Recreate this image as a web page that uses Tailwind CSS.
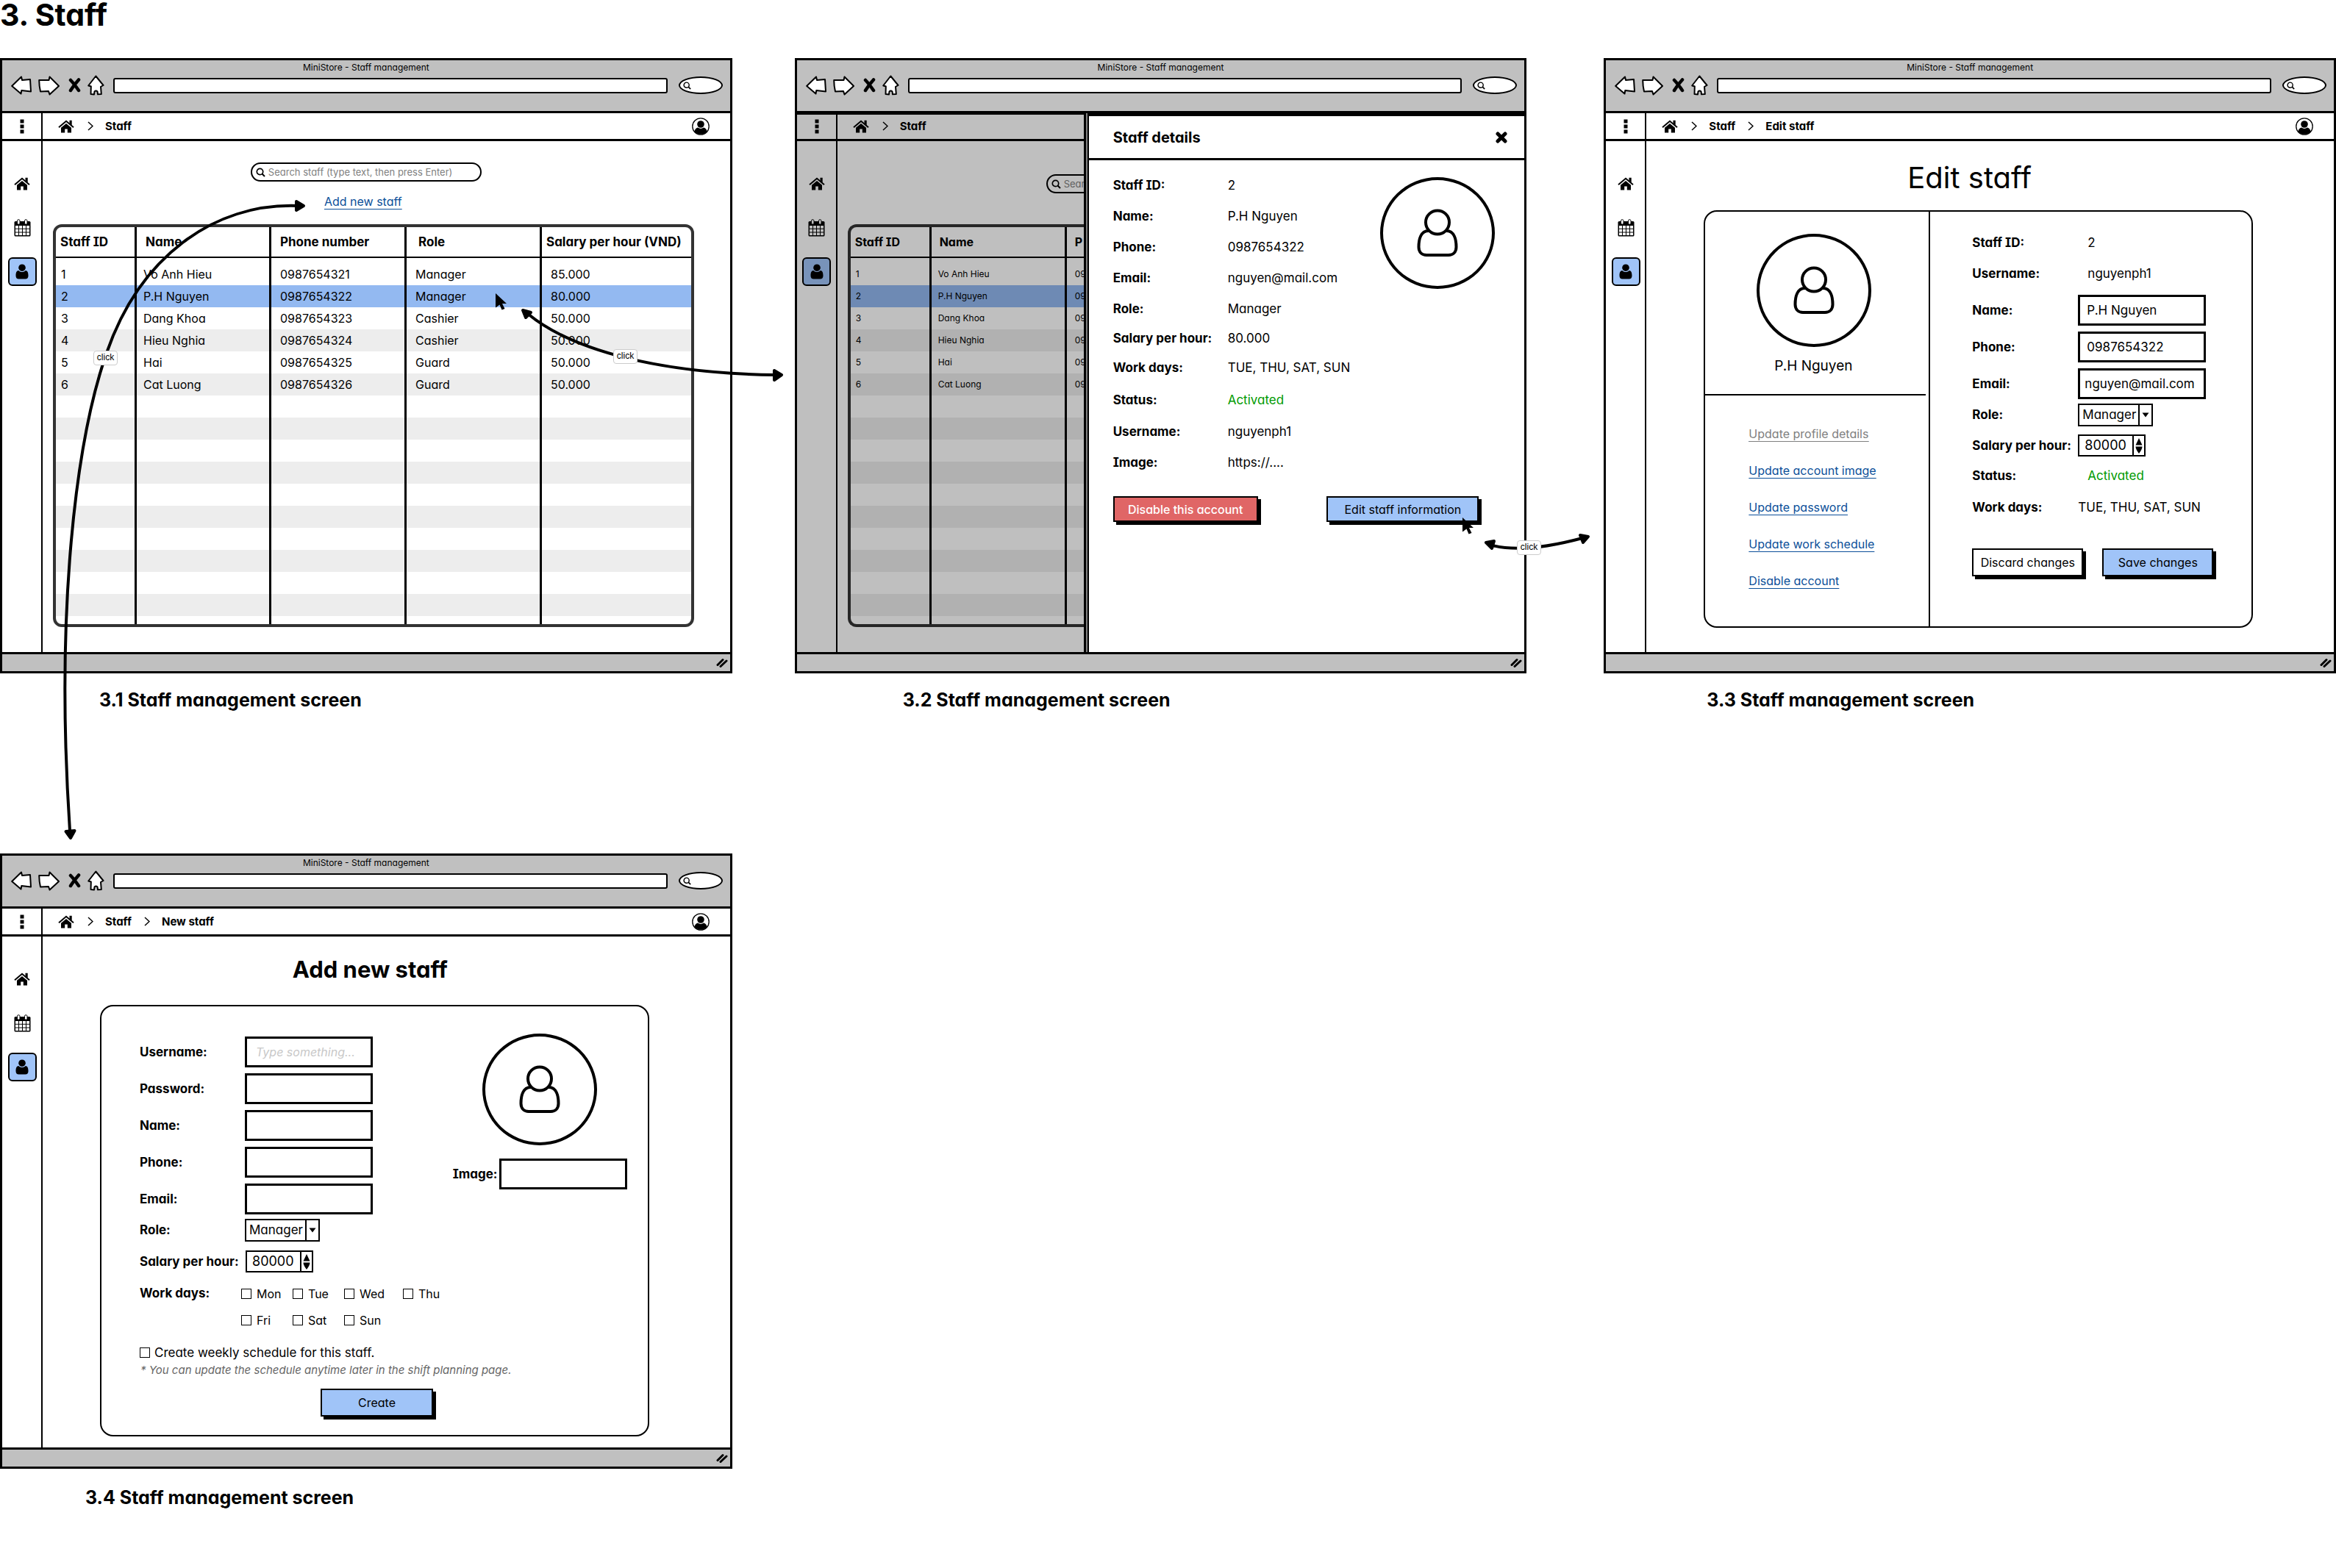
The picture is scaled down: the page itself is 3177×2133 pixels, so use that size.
<!DOCTYPE html>
<html lang="en">
<head>
<meta charset="utf-8">
<title>MiniStore - Staff wireframes</title>
<script src="https://cdn.jsdelivr.net/npm/@tailwindcss/browser@4"></script>
</head>
<body class="relative bg-white text-black [font-family:Inter,sans-serif] [font-feature-settings:'cv11','cv08'] overflow-x-hidden">

<!-- Shared icons -->
<svg class="hidden">
  <symbol id="back" viewBox="0 0 28 27"><path d="M1.2 14 14 1.5 15 6 26 5 27 21.500 14.300 20 13.500 24.500Z" fill="#fff" stroke="#000" stroke-width="2" stroke-linejoin="round"/></symbol>
  <symbol id="forward" viewBox="0 0 29 27"><path d="M1.200 6 14.500 6 15.500 1.500 28 14 15.500 25.500 14 21 3 21.500Q1.200 14 1.200 6Z" fill="#fff" stroke="#000" stroke-width="2" stroke-linejoin="round"/></symbol>
  <symbol id="stop" viewBox="0 0 17 20"><path d="M3 3Q7 7 14 17M14 2.500Q8 9 3 17" fill="none" stroke="#000" stroke-width="4.500" stroke-linecap="round"/></symbol>
  <symbol id="up" viewBox="0 0 23 28"><path d="M11.300 1.500 21.500 14 18 16 18.800 26 14 26.300 13.500 22.500Q11.500 20.500 9.500 22.500L9 26.500 4.500 26 4.800 15.500 1.200 14.500Z" fill="#fff" stroke="#000" stroke-width="2" stroke-linejoin="round"/></symbol>
  <symbol id="house" viewBox="0 0 22 18"><path d="M1 10.200 11 1.800 21 10.200" fill="none" stroke="#000" stroke-width="2"/><path d="M15.500 .8h3.200v6.500l-3.200-2.600ZM4 10.800 11 5l7 5.800V17.500H12.800V12.500H9.200V17.500H4Z"/></symbol>
  <symbol id="calendar" viewBox="0 0 23 24"><path d="M2 3H21Q22.500 3 22.500 4.500V22Q22.500 23.500 21 23.500H2Q.5 23.500 .5 22V4.500Q.5 3 2 3Z"/><path d="M2 9h4v3.700H2zM7 9h4v3.700H7zM12 9h4v3.700h-4zM17 9h4v3.700h-4zM2 13.700h4v3.700H2zM7 13.700h4v3.700H7zM12 13.700h4v3.700h-4zM17 13.700h4v3.700h-4zM2 18.400h4v3.700H2zM7 18.400h4v3.700H7zM12 18.400h4v3.700h-4zM17 18.400h4v3.700h-4z" fill="#fff"/><rect x="4.500" y=".7" width="3.500" height="6.500" rx="1.700" fill="#fff" stroke="#000"/><rect x="14.500" y=".7" width="3.500" height="6.500" rx="1.700" fill="#fff" stroke="#000"/></symbol>
  <symbol id="user" viewBox="0 0 18 21"><circle cx="9" cy="5.200" r="4.800"/><path d="M4.300 9C1.500 9 .5 12 .5 16 .5 19 2 20.500 4.500 20.500h9C16 20.500 17.500 19 17.500 16 17.500 12 16.500 9 13.700 9 11 11.800 7 11.800 4.300 9Z"/></symbol>
  <symbol id="account" viewBox="0 0 24 24"><circle cx="12" cy="12" r="11.200" fill="none" stroke="#000" stroke-width="1.300"/><circle cx="12" cy="9" r="4.800"/><path d="M3.500 19Q4 14.500 8 13.500 12 16.300 16 13.500 20 14.500 20.500 19A11.500 11.500 0 0 1 3.500 19Z"/></symbol>
  <symbol id="person" viewBox="0 0 56 66"><circle cx="28" cy="18.500" r="16" fill="none" stroke="#000" stroke-width="4"/><path d="M16 30C5 30 2.500 42 2.500 52 2.500 59 7 63 13 63H43C49 63 53.500 59 53.500 52 53.500 42 51 30 40 30" fill="none" stroke="#000" stroke-width="4"/></symbol>
  <symbol id="chevron" viewBox="0 0 8 13"><path d="M1 1 7 6.500 1 12" fill="none" stroke="#000" stroke-width="1.500"/></symbol>
  <symbol id="lens" viewBox="0 0 13 13"><circle cx="5.500" cy="5.500" r="4.200" fill="none" stroke="#000" stroke-width="1.700"/><path d="M8.500 8.500 12 12" stroke="#000" stroke-width="2"/></symbol>
  <symbol id="kebab" viewBox="0 0 6 20"><path d="M.5 .5h5v5h-5zM.5 7.500h5v5h-5zM.5 14.500h5v5h-5z"/></symbol>
  <symbol id="grip" viewBox="0 0 16 13"><path d="M2 9.500 9 2.500M6 11.500 14 4" stroke="#000" stroke-width="3" stroke-linecap="round"/></symbol>
  <symbol id="pointer" viewBox="0 0 17 25"><path d="M1 1 16 15H10L13.500 22 9.500 23.500 6.500 16.500 1 20.500Z"/></symbol>
  <symbol id="cross" viewBox="0 0 16 16"><path d="M3 3 13 13M13 3 3 13" stroke="#000" stroke-width="5" stroke-linecap="round"/></symbol>
  <symbol id="caret" viewBox="0 0 10 7"><path d="M.5 .5h9L5 6.500Z"/></symbol>
  <symbol id="steps" viewBox="0 0 10 21"><path d="M5 0 9.500 9.500H.5ZM.5 11.500h9Q9.500 15 5 21 .5 15 .5 11.500Z"/></symbol>
</svg>

<h1 class="text-[41px] leading-10 font-bold">3. Staff</h1>

<main class="mt-[39px] flex items-start">

  <!-- Column 1 -->
  <div class="flex-1 min-w-0">

    <!-- 3.1 Staff list -->
    <section class="border-3 border-black bg-white">
      <header class="h-[72px] bg-[#c0c0c0] border-b-3 border-black">
        <p class="pt-[2px] text-center text-[12px] leading-4">MiniStore - Staff management</p>
        <div class="flex items-center pl-3 pr-[10px] h-8">
          <svg class="w-7 h-[27px]"><use href="#back"/></svg>
          <svg class="ml-[9px] w-[29px] h-[27px]"><use href="#forward"/></svg>
          <svg class="ml-3 w-[17px] h-5"><use href="#stop"/></svg>
          <svg class="ml-[9px] w-[23px] h-7"><use href="#up"/></svg>
          <input aria-label="Address" class="ml-3 flex-1 min-w-0 h-[21px] bg-white border-2 border-black rounded-[3px]">
          <div class="ml-[15px] w-[60px] h-6 flex items-center pl-1 bg-white border-2 border-black rounded-[50%/50%]"><svg class="size-[11px]"><use href="#lens"/></svg></div>
        </div>
      </header>
      <nav class="h-[38px] flex items-center border-b-3 border-black text-[15px] leading-5 font-bold">
        <div class="w-[55px] h-full shrink-0 pl-px border-r-2 border-black grid place-items-center"><svg class="w-[6px] h-5"><use href="#kebab"/></svg></div>
        <a href="#" aria-label="Home" class="ml-[21px]"><svg class="w-[22px] h-[18px]"><use href="#house"/></svg></a>
        <svg class="ml-[18px] w-2 h-[13px]"><use href="#chevron"/></svg>
        <a href="#" class="ml-4">Staff</a>
        <a href="#" aria-label="Account" class="ml-auto mr-[28px]"><svg class="size-6"><use href="#account"/></svg></a>
      </nav>
      <div class="flex min-h-[695px]">
        <aside class="w-[55px] shrink-0 pl-px border-r-2 border-black flex flex-col items-center pt-[49px]">
          <a href="#" aria-label="Home"><svg class="w-[22px] h-[18px]"><use href="#house"/></svg></a>
          <a href="#" aria-label="Calendar" class="mt-[39px]"><svg class="w-[23px] h-6"><use href="#calendar"/></svg></a>
          <a href="#" aria-label="Staff" class="mt-[28px] size-[39px] grid place-items-center bg-[#a0c4f8] border-2 border-black rounded-md"><svg class="w-[18px] h-[21px]"><use href="#user"/></svg></a>
        </aside>
        <div class="flex-1 min-w-0 pl-[14px] pr-[49px] pt-[29px]">
          <div class="flex flex-col items-center pr-5">
            <label class="w-[314px] h-[26px] flex items-center pl-[5px] border-2 border-black rounded-full">
              <svg class="size-[13px]"><use href="#lens"/></svg>
              <input type="search" aria-label="Search staff" placeholder="Search staff (type text, then press Enter)" class="ml-1 flex-1 min-w-0 text-[13px] leading-5 outline-none placeholder:text-[#808080]">
            </label>
            <a href="#" class="mt-[15px] mr-2 text-[16px] leading-6 text-[#0b4f99] underline underline-offset-4">Add new staff</a>
          </div>
          <div class="mt-[19px] border-4 border-[#333] rounded-[12px] overflow-hidden">
            <table class="w-full table-fixed border-separate border-spacing-0 text-left text-[16px] leading-5 [&_td]:h-[30px] [&_td]:p-0 [&_td]:pl-3 [&_td:first-child]:pl-[7px] [&_td:nth-child(2)]:pl-[9px] [&_td]:border-r-3 [&_td:last-child]:border-r-0 [&_th]:border-r-3 [&_th:last-child]:border-r-0 [&_td]:border-black [&_th]:border-black">
              <colgroup><col class="w-[110px]"><col class="w-[183px]"><col class="w-[184px]"><col class="w-[184px]"><col></colgroup>
              <thead class="text-[17px]"><tr class="h-[42px] [&>th]:border-b-2 [&>th]:p-0 [&>th]:font-bold"><th class="pl-[6px]!">Staff ID</th><th class="pl-3!">Name</th><th class="pl-3!">Phone number</th><th class="pl-4!">Role</th><th class="pl-[6px]!">Salary per hour (VND)</th></tr></thead>
              <tbody>
                <tr class="[&>td]:h-[37px]! [&>td]:pt-[7px]!"><td>1</td><td>Vo Anh Hieu</td><td>0987654321</td><td>Manager</td><td>85.000</td></tr>
                <tr class="bg-[#93b9f1]"><td>2</td><td>P.H Nguyen</td><td>0987654322</td><td>Manager</td><td>80.000</td></tr>
                <tr><td>3</td><td>Dang Khoa</td><td>0987654323</td><td>Cashier</td><td>50.000</td></tr>
                <tr class="bg-[#ededed]"><td>4</td><td>Hieu Nghia</td><td>0987654324</td><td>Cashier</td><td>50.000</td></tr>
                <tr><td>5</td><td>Hai</td><td>0987654325</td><td>Guard</td><td>50.000</td></tr>
                <tr class="bg-[#ededed]"><td>6</td><td>Cat Luong</td><td>0987654326</td><td>Guard</td><td>50.000</td></tr>
                <tr><td></td><td></td><td></td><td></td><td></td></tr>
                <tr class="bg-[#ededed]"><td></td><td></td><td></td><td></td><td></td></tr>
                <tr><td></td><td></td><td></td><td></td><td></td></tr>
                <tr class="bg-[#ededed]"><td></td><td></td><td></td><td></td><td></td></tr>
                <tr><td></td><td></td><td></td><td></td><td></td></tr>
                <tr class="bg-[#ededed]"><td></td><td></td><td></td><td></td><td></td></tr>
                <tr><td></td><td></td><td></td><td></td><td></td></tr>
                <tr class="bg-[#ededed]"><td></td><td></td><td></td><td></td><td></td></tr>
                <tr><td></td><td></td><td></td><td></td><td></td></tr>
                <tr class="bg-[#ededed]"><td></td><td></td><td></td><td></td><td></td></tr>
                <tr class="[&>td]:h-[11px]!"><td></td><td></td><td></td><td></td><td></td></tr>
              </tbody>
            </table>
          </div>
        </div>
      </div>
      <footer class="h-[26px] bg-[#c0c0c0] border-t-3 border-black flex items-center justify-end pr-[3px]"><svg class="w-4 h-[13px]"><use href="#grip"/></svg></footer>
    </section>
    <h2 class="mt-5 pl-[135px] text-[25px] leading-8 font-bold">3.1 Staff management screen</h2>

    <!-- 3.4 Add new staff -->
    <section class="mt-[193px] border-3 border-black bg-white">
      <header class="h-[72px] bg-[#c0c0c0] border-b-3 border-black">
        <p class="pt-[2px] text-center text-[12px] leading-4">MiniStore - Staff management</p>
        <div class="flex items-center pl-3 pr-[10px] h-8">
          <svg class="w-7 h-[27px]"><use href="#back"/></svg>
          <svg class="ml-[9px] w-[29px] h-[27px]"><use href="#forward"/></svg>
          <svg class="ml-3 w-[17px] h-5"><use href="#stop"/></svg>
          <svg class="ml-[9px] w-[23px] h-7"><use href="#up"/></svg>
          <input aria-label="Address" class="ml-3 flex-1 min-w-0 h-[21px] bg-white border-2 border-black rounded-[3px]">
          <div class="ml-[15px] w-[60px] h-6 flex items-center pl-1 bg-white border-2 border-black rounded-[50%/50%]"><svg class="size-[11px]"><use href="#lens"/></svg></div>
        </div>
      </header>
      <nav class="h-[38px] flex items-center border-b-3 border-black text-[15px] leading-5 font-bold">
        <div class="w-[55px] h-full shrink-0 pl-px border-r-2 border-black grid place-items-center"><svg class="w-[6px] h-5"><use href="#kebab"/></svg></div>
        <a href="#" aria-label="Home" class="ml-[21px]"><svg class="w-[22px] h-[18px]"><use href="#house"/></svg></a>
        <svg class="ml-[18px] w-2 h-[13px]"><use href="#chevron"/></svg>
        <a href="#" class="ml-4">Staff</a>
        <svg class="ml-[17px] w-2 h-[13px]"><use href="#chevron"/></svg>
        <a href="#" class="ml-4">New staff</a>
        <a href="#" aria-label="Account" class="ml-auto mr-[28px]"><svg class="size-6"><use href="#account"/></svg></a>
      </nav>
      <div class="flex min-h-[695px]">
        <aside class="w-[55px] shrink-0 pl-px border-r-2 border-black flex flex-col items-center pt-[49px]">
          <a href="#" aria-label="Home"><svg class="w-[22px] h-[18px]"><use href="#house"/></svg></a>
          <a href="#" aria-label="Calendar" class="mt-[39px]"><svg class="w-[23px] h-6"><use href="#calendar"/></svg></a>
          <a href="#" aria-label="Staff" class="mt-[28px] size-[39px] grid place-items-center bg-[#a0c4f8] border-2 border-black rounded-md"><svg class="w-[18px] h-[21px]"><use href="#user"/></svg></a>
        </aside>
        <div class="flex-1 min-w-0 pt-[21px]">
          <h3 class="pr-11 text-center text-[31px] leading-[48px] font-bold">Add new staff</h3>
          <form class="mt-6 ml-[78px] mr-[110px] pt-[37px] pb-[25px] border-2 border-black rounded-[18px]">
            <div class="flex pl-[52px] pr-[28px]">
              <div class="flex-1 min-w-0 text-[17px] leading-5">
                <div class="h-[50px] flex items-center"><label for="n-user" class="w-[143px] font-bold">Username:</label><input id="n-user" placeholder="Type something..." class="w-[174px] h-[42px] px-3 border-3 border-black outline-none placeholder:italic placeholder:text-[16px] placeholder:text-[#c8c8c8]"></div>
                <div class="h-[50px] flex items-center"><label for="n-pass" class="w-[143px] font-bold">Password:</label><input id="n-pass" type="password" class="w-[174px] h-[42px] px-3 border-3 border-black"></div>
                <div class="h-[50px] flex items-center"><label for="n-name" class="w-[143px] font-bold">Name:</label><input id="n-name" class="w-[174px] h-[42px] px-3 border-3 border-black"></div>
                <div class="h-[50px] flex items-center"><label for="n-phone" class="w-[143px] font-bold">Phone:</label><input id="n-phone" type="tel" class="w-[174px] h-[42px] px-3 border-3 border-black"></div>
                <div class="h-[50px] flex items-center"><label for="n-email" class="w-[143px] font-bold">Email:</label><input id="n-email" type="email" class="w-[174px] h-[42px] px-3 border-3 border-black"></div>
                <div class="h-[34px] flex items-center"><label for="n-role" class="w-[143px] font-bold">Role:</label>
                  <div class="w-[102px] h-[31px] flex border-2 border-black"><select id="n-role" class="appearance-none flex-1 min-w-0 pl-1 outline-none"><option>Manager</option><option>Cashier</option><option>Guard</option></select><span class="w-[18px] border-l-2 border-black grid place-items-center"><svg class="w-[10px] h-[7px]"><use href="#caret"/></svg></span></div>
                </div>
                <div class="h-[52px] flex items-center"><label for="n-salary" class="w-36 font-bold">Salary per hour:</label>
                  <div class="w-[92px] h-[30px] flex border-2 border-black"><input id="n-salary" type="number" value="80000" class="appearance-none [appearance:textfield] [&::-webkit-inner-spin-button]:appearance-none flex-1 min-w-0 pl-[7px] text-[18px] outline-none"><span class="w-4 border-l-2 border-black grid place-items-center"><svg class="w-[10px] h-[21px]"><use href="#steps"/></svg></span></div>
                </div>
                <fieldset class="flex text-[16px]">
                  <legend class="float-left w-[138px] shrink-0 text-[17px] leading-[35px] font-bold">Work days:</legend>
                  <div class="grid grid-cols-[70px_70px_80px_70px] auto-rows-[36px] items-center">
                    <label class="flex items-center gap-[7px]"><input type="checkbox" class="appearance-none size-[14px] border border-black">Mon</label>
                    <label class="flex items-center gap-[7px]"><input type="checkbox" class="appearance-none size-[14px] border border-black">Tue</label>
                    <label class="flex items-center gap-[7px]"><input type="checkbox" class="appearance-none size-[14px] border border-black">Wed</label>
                    <label class="flex items-center gap-[7px]"><input type="checkbox" class="appearance-none size-[14px] border border-black">Thu</label>
                    <label class="flex items-center gap-[7px]"><input type="checkbox" class="appearance-none size-[14px] border border-black">Fri</label>
                    <label class="flex items-center gap-[7px]"><input type="checkbox" class="appearance-none size-[14px] border border-black">Sat</label>
                    <label class="flex items-center gap-[7px]"><input type="checkbox" class="appearance-none size-[14px] border border-black">Sun</label>
                  </div>
                </fieldset>
              </div>
              <div class="w-[237px] shrink-0 flex flex-col items-center">
                <div class="w-[156px] h-[152px] grid place-items-center border-4 border-black rounded-[50%]"><svg class="w-[56px] h-[66px]"><use href="#person"/></svg></div>
                <div class="mt-[18px] w-full flex items-center justify-between"><label for="n-image" class="text-[17px] leading-5 font-bold">Image:</label><input id="n-image" class="w-[174px] h-[42px] px-3 border-3 border-black"></div>
              </div>
            </div>
            <label class="mt-[14px] ml-[52px] flex items-center gap-[6px] text-[17px] leading-6"><input type="checkbox" class="appearance-none size-[14px] border border-black">Create weekly schedule for this staff.</label>
            <p class="ml-[53px] text-[15px] leading-6 italic text-[#666]">* You can update the schedule anytime later in the shift planning page.</p>
            <button type="button" class="mt-[13px] ml-[298px] block w-[153px] h-[38px] text-[16px] leading-5 bg-[#a0c4f8] border-2 border-black shadow-[4px_4px_0_#000]">Create</button>
          </form>
        </div>
      </div>
      <footer class="h-[26px] bg-[#c0c0c0] border-t-3 border-black flex items-center justify-end pr-[3px]"><svg class="w-4 h-[13px]"><use href="#grip"/></svg></footer>
    </section>
    <h2 class="mt-[23px] pl-[116px] text-[25px] leading-8 font-bold">3.4 Staff management screen</h2>
  </div>

  <!-- Column 2: 3.2 Staff details -->
  <div class="flex-1 min-w-0 ml-[85px]">
    <section class="border-3 border-black bg-white">
      <header class="h-[72px] bg-[#c0c0c0] border-b-3 border-black">
        <p class="pt-[2px] text-center text-[12px] leading-4">MiniStore - Staff management</p>
        <div class="flex items-center pl-3 pr-[10px] h-8">
          <svg class="w-7 h-[27px]"><use href="#back"/></svg>
          <svg class="ml-[9px] w-[29px] h-[27px]"><use href="#forward"/></svg>
          <svg class="ml-3 w-[17px] h-5"><use href="#stop"/></svg>
          <svg class="ml-[9px] w-[23px] h-7"><use href="#up"/></svg>
          <input aria-label="Address" class="ml-3 flex-1 min-w-0 h-[21px] bg-white border-2 border-black rounded-[3px]">
          <div class="ml-[15px] w-[60px] h-6 flex items-center pl-1 bg-white border-2 border-black rounded-[50%/50%]"><svg class="size-[11px]"><use href="#lens"/></svg></div>
        </div>
      </header>
      <div class="relative">
        <nav class="h-[38px] flex items-center border-b-3 border-black text-[15px] leading-5 font-bold">
          <div class="w-[55px] h-full shrink-0 pl-px border-r-2 border-black grid place-items-center"><svg class="w-[6px] h-5"><use href="#kebab"/></svg></div>
          <a href="#" aria-label="Home" class="ml-[21px]"><svg class="w-[22px] h-[18px]"><use href="#house"/></svg></a>
          <svg class="ml-[18px] w-2 h-[13px]"><use href="#chevron"/></svg>
          <a href="#" class="ml-4">Staff</a>
        </nav>
        <div class="flex min-h-[695px]">
          <aside class="w-[55px] shrink-0 pl-px border-r-2 border-black flex flex-col items-center pt-[49px]">
            <a href="#" aria-label="Home"><svg class="w-[22px] h-[18px]"><use href="#house"/></svg></a>
            <a href="#" aria-label="Calendar" class="mt-[39px]"><svg class="w-[23px] h-6"><use href="#calendar"/></svg></a>
            <a href="#" aria-label="Staff" class="mt-[28px] size-[39px] grid place-items-center bg-[#a0c4f8] border-2 border-black rounded-md"><svg class="w-[18px] h-[21px]"><use href="#user"/></svg></a>
          </aside>
          <div class="flex-1 min-w-0 pl-[14px] pt-[45px]">
            <div class="pl-[270px]">
              <label class="w-[314px] h-[26px] flex items-center pl-[5px] border-2 border-black rounded-full">
                <svg class="size-[13px]"><use href="#lens"/></svg>
                <input type="search" aria-label="Search staff" placeholder="Search" class="ml-1 w-16 text-[13px] leading-5 outline-none placeholder:text-[#808080]">
              </label>
            </div>
            <div class="mt-[42px] w-[330px] h-[548px] border-4 border-r-0 border-[#333] rounded-l-[12px] overflow-hidden">
              <table class="w-full table-fixed border-separate border-spacing-0 text-left text-[12px] leading-5 [&_td]:h-[30px] [&_td]:p-0 [&_td]:pl-[11px] [&_td:first-child]:pl-[7px] [&_td:nth-child(2)]:pl-[9px] [&_td]:border-r-3 [&_td:last-child]:border-r-0 [&_th]:border-r-3 [&_th:last-child]:border-r-0 [&_td]:border-black [&_th]:border-black [&_td]:overflow-hidden">
                <colgroup><col class="w-[110px]"><col class="w-[184px]"><col></colgroup>
                <thead class="text-[16px]"><tr class="h-[42px] [&>th]:border-b-2 [&>th]:p-0 [&>th]:font-bold"><th class="pl-[6px]!">Staff ID</th><th class="pl-[11px]!">Name</th><th class="pl-[11px]!">P</th></tr></thead>
                <tbody>
                  <tr class="[&>td]:h-[37px]! [&>td]:pt-[7px]!"><td>1</td><td>Vo Anh Hieu</td><td>09</td></tr>
                  <tr class="bg-[#93b9f1]"><td>2</td><td>P.H Nguyen</td><td>09</td></tr>
                  <tr><td>3</td><td>Dang Khoa</td><td>09</td></tr>
                  <tr class="bg-[#ededed]"><td>4</td><td>Hieu Nghia</td><td>09</td></tr>
                  <tr><td>5</td><td>Hai</td><td>09</td></tr>
                  <tr class="bg-[#ededed]"><td>6</td><td>Cat Luong</td><td>09</td></tr>
                  <tr><td></td><td></td><td></td></tr>
                  <tr class="bg-[#ededed]"><td></td><td></td><td></td></tr>
                  <tr><td></td><td></td><td></td></tr>
                  <tr class="bg-[#ededed]"><td></td><td></td><td></td></tr>
                  <tr><td></td><td></td><td></td></tr>
                  <tr class="bg-[#ededed]"><td></td><td></td><td></td></tr>
                  <tr><td></td><td></td><td></td></tr>
                  <tr class="bg-[#ededed]"><td></td><td></td><td></td></tr>
                  <tr><td></td><td></td><td></td></tr>
                  <tr class="bg-[#ededed]"><td></td><td></td><td></td></tr>
                  <tr class="[&>td]:h-[11px]!"><td></td><td></td><td></td></tr>
                </tbody>
              </table>
            </div>
          </div>
        </div>

        <!-- Backdrop and drawer -->
        <div class="absolute inset-0 flex">
          <div class="w-[393px] shrink-0 bg-black/25 border-r-3 border-t-2 border-black"></div>
          <div class="w-[2px] shrink-0 bg-[#808080]"></div>
          <div class="flex-1 min-w-0 bg-white border-l-2 border-t-4 border-black">
            <div class="h-[60px] flex items-center justify-between pl-[33px] pr-[23px] border-b-3 border-black">
              <h3 class="text-[20px] leading-6 font-bold">Staff details</h3>
              <button type="button" aria-label="Close" class="size-4"><svg class="size-4"><use href="#cross"/></svg></button>
            </div>
            <div class="flex justify-between pl-[33px] pr-10 pt-[13px]">
              <dl class="grid grid-cols-[156px_auto] auto-rows-[42px] grid-rows-[42px_42px_42px_42px_42px_38px_42px_45px] items-center text-[17px] leading-5 [&_dt]:font-bold">
                <dt>Staff ID:</dt><dd>2</dd>
                <dt>Name:</dt><dd>P.H Nguyen</dd>
                <dt>Phone:</dt><dd>0987654322</dd>
                <dt>Email:</dt><dd>nguyen@mail.com</dd>
                <dt>Role:</dt><dd>Manager</dd>
                <dt>Salary per hour:</dt><dd>80.000</dd>
                <dt>Work days:</dt><dd>TUE, THU, SAT, SUN</dd>
                <dt>Status:</dt><dd class="text-[#009a00]">Activated</dd>
                <dt>Username:</dt><dd>nguyenph1</dd>
                <dt>Image:</dt><dd>https://....</dd>
              </dl>
              <div class="mt-[10px] w-[156px] h-[152px] shrink-0 grid place-items-center border-4 border-black rounded-[50%]"><svg class="w-[56px] h-[66px]"><use href="#person"/></svg></div>
            </div>
            <div class="mt-[25px] pl-[33px] pr-[62px] flex justify-between text-[16px] leading-5">
              <button type="button" class="w-[197px] h-[35px] text-white font-medium bg-[#e06666] border-2 border-black shadow-[4px_4px_0_#000]">Disable this account</button>
              <button type="button" class="w-[207px] h-[35px] bg-[#a0c4f8] border-2 border-black shadow-[4px_4px_0_#000]">Edit staff information</button>
            </div>
          </div>
        </div>
      </div>
      <footer class="h-[26px] bg-[#c0c0c0] border-t-3 border-black flex items-center justify-end pr-[3px]"><svg class="w-4 h-[13px]"><use href="#grip"/></svg></footer>
    </section>
    <h2 class="mt-5 pl-[147px] text-[25px] leading-8 font-bold">3.2 Staff management screen</h2>
  </div>

  <!-- Column 3: 3.3 Edit staff -->
  <div class="flex-1 min-w-0 ml-[105px]">
    <section class="border-3 border-black bg-white">
      <header class="h-[72px] bg-[#c0c0c0] border-b-3 border-black">
        <p class="pt-[2px] text-center text-[12px] leading-4">MiniStore - Staff management</p>
        <div class="flex items-center pl-3 pr-[10px] h-8">
          <svg class="w-7 h-[27px]"><use href="#back"/></svg>
          <svg class="ml-[9px] w-[29px] h-[27px]"><use href="#forward"/></svg>
          <svg class="ml-3 w-[17px] h-5"><use href="#stop"/></svg>
          <svg class="ml-[9px] w-[23px] h-7"><use href="#up"/></svg>
          <input aria-label="Address" class="ml-3 flex-1 min-w-0 h-[21px] bg-white border-2 border-black rounded-[3px]">
          <div class="ml-[15px] w-[60px] h-6 flex items-center pl-1 bg-white border-2 border-black rounded-[50%/50%]"><svg class="size-[11px]"><use href="#lens"/></svg></div>
        </div>
      </header>
      <nav class="h-[38px] flex items-center border-b-3 border-black text-[15px] leading-5 font-bold">
        <div class="w-[55px] h-full shrink-0 pl-px border-r-2 border-black grid place-items-center"><svg class="w-[6px] h-5"><use href="#kebab"/></svg></div>
        <a href="#" aria-label="Home" class="ml-[21px]"><svg class="w-[22px] h-[18px]"><use href="#house"/></svg></a>
        <svg class="ml-[18px] w-2 h-[13px]"><use href="#chevron"/></svg>
        <a href="#" class="ml-4">Staff</a>
        <svg class="ml-[17px] w-2 h-[13px]"><use href="#chevron"/></svg>
        <a href="#" class="ml-4">Edit staff</a>
        <a href="#" aria-label="Account" class="ml-auto mr-[28px]"><svg class="size-6"><use href="#account"/></svg></a>
      </nav>
      <div class="flex min-h-[695px]">
        <aside class="w-[55px] shrink-0 pl-px border-r-2 border-black flex flex-col items-center pt-[49px]">
          <a href="#" aria-label="Home"><svg class="w-[22px] h-[18px]"><use href="#house"/></svg></a>
          <a href="#" aria-label="Calendar" class="mt-[39px]"><svg class="w-[23px] h-6"><use href="#calendar"/></svg></a>
          <a href="#" aria-label="Staff" class="mt-[28px] size-[39px] grid place-items-center bg-[#a0c4f8] border-2 border-black rounded-md"><svg class="w-[18px] h-[21px]"><use href="#user"/></svg></a>
        </aside>
        <div class="flex-1 min-w-0 pt-[26px]">
          <h3 class="pr-14 text-center text-[40px] leading-[48px]">Edit staff</h3>
          <div class="mt-5 ml-[78px] mr-[110px] min-h-[568px] flex border-2 border-black rounded-[18px]">
            <div class="w-[306px] shrink-0 border-r-2 border-black">
              <div class="pt-[30px] pb-[22px] flex flex-col items-center mr-1 border-b-2 border-black">
                <div class="w-[156px] h-[154px] grid place-items-center border-4 border-black rounded-[50%] mr-1"><svg class="w-[56px] h-[66px]"><use href="#person"/></svg></div>
                <p class="mt-[10px] mr-[6px] text-[19px] leading-8">P.H Nguyen</p>
              </div>
              <ul class="pt-[27px] pl-[59px] text-[16px] leading-[50px] text-[#0b4f99] underline underline-offset-4">
                <li><a href="#" class="text-[#808080] underline underline-offset-4">Update profile details</a></li>
                <li><a href="#">Update account image</a></li>
                <li><a href="#">Update password</a></li>
                <li><a href="#">Update work schedule</a></li>
                <li><a href="#">Disable account</a></li>
              </ul>
            </div>
            <form class="flex-1 min-w-0 pl-[57px] pt-[21px] text-[17px] leading-5">
              <div class="h-[42px] flex items-center"><span class="w-[157px] font-bold">Staff ID:</span><span>2</span></div>
              <div class="h-[42px] flex items-center"><span class="w-[157px] font-bold">Username:</span><span>nguyenph1</span></div>
              <div class="mt-1 h-[50px] flex items-center"><label for="e-name" class="w-36 font-bold">Name:</label><input id="e-name" value="P.H Nguyen" class="w-[174px] h-[42px] pl-[9px] border-3 border-black"></div>
              <div class="h-[50px] flex items-center"><label for="e-phone" class="w-36 font-bold">Phone:</label><input id="e-phone" type="tel" value="0987654322" class="w-[174px] h-[42px] pl-[9px] border-3 border-black"></div>
              <div class="h-[50px] flex items-center"><label for="e-email" class="w-36 font-bold">Email:</label><input id="e-email" type="email" value="nguyen@mail.com" class="w-[174px] h-[42px] pl-[6px] border-3 border-black"></div>
              <div class="h-[34px] flex items-center"><label for="e-role" class="w-36 font-bold">Role:</label>
                <div class="w-[102px] h-[31px] flex border-2 border-black"><select id="e-role" class="appearance-none flex-1 min-w-0 pl-1 outline-none"><option>Manager</option><option>Cashier</option><option>Guard</option></select><span class="w-[18px] border-l-2 border-black grid place-items-center"><svg class="w-[10px] h-[7px]"><use href="#caret"/></svg></span></div>
              </div>
              <div class="h-[50px] flex items-center"><label for="e-salary" class="w-36 font-bold">Salary per hour:</label>
                <div class="w-[92px] h-[30px] flex border-2 border-black"><input id="e-salary" type="number" value="80000" class="appearance-none [appearance:textfield] [&::-webkit-inner-spin-button]:appearance-none flex-1 min-w-0 pl-[7px] text-[18px] outline-none"><span class="w-4 border-l-2 border-black grid place-items-center"><svg class="w-[10px] h-[21px]"><use href="#steps"/></svg></span></div>
              </div>
              <div class="h-8 flex items-center"><span class="w-[157px] font-bold">Status:</span><span class="text-[#009a00]">Activated</span></div>
              <div class="h-[54px] flex items-center"><span class="w-36 font-bold">Work days:</span><span>TUE, THU, SAT, SUN</span></div>
              <div class="mt-[29px] flex gap-[26px] text-[16px]">
                <button type="button" class="w-[151px] h-[38px] bg-white border-2 border-black shadow-[4px_4px_0_#000]">Discard changes</button>
                <button type="button" class="w-[151px] h-[38px] bg-[#a0c4f8] border-2 border-black shadow-[4px_4px_0_#000]">Save changes</button>
              </div>
            </form>
          </div>
        </div>
      </div>
      <footer class="h-[26px] bg-[#c0c0c0] border-t-3 border-black flex items-center justify-end pr-[3px]"><svg class="w-4 h-[13px]"><use href="#grip"/></svg></footer>
    </section>
    <h2 class="mt-5 pl-[140px] text-[25px] leading-8 font-bold">3.3 Staff management screen</h2>
  </div>
</main>

<!-- Flow arrows between the screens -->
<svg class="absolute inset-0 size-full pointer-events-none" fill="none" stroke="#000" stroke-width="4" stroke-linecap="round" stroke-linejoin="round">
  <path d="M405 280C290 276 190 350 145 480 103 600 75 830 95 1130"/>
  <path d="M413 280 403 286V274Z" fill="#000"/>
  <path d="M96 1140 89.500 1131 101.500 1130Z" fill="#000"/>
  <path d="M718 427C780 478 900 508 1055 510"/>
  <path d="M711 422 722 425 715 432Z" fill="#000"/>
  <path d="M1063 510 1053 504V517Z" fill="#000"/>
  <path d="M2026 741Q2070 754 2152 732"/>
  <path d="M2021 738 2032 736 2029 746Z" fill="#000"/>
  <path d="M2160 730 2149 728 2153 738Z" fill="#000"/>
</svg>
<span class="absolute left-[127px] top-[477px] w-[33px] h-5 text-center text-[12px] leading-[17px] [font-family:'Liberation_Sans',sans-serif] bg-white border border-[#ccc] rounded-[4px]">click</span>
<span class="absolute left-[834px] top-[475px] w-[33px] h-5 text-center text-[12px] leading-[17px] [font-family:'Liberation_Sans',sans-serif] bg-white border border-[#ccc] rounded-[4px]">click</span>
<span class="absolute left-[2063px] top-[735px] w-[33px] h-5 text-center text-[12px] leading-[17px] [font-family:'Liberation_Sans',sans-serif] bg-white border border-[#ccc] rounded-[4px]">click</span>
<svg class="absolute left-[673px] top-[398px] w-[17px] h-[25px]"><use href="#pointer"/></svg>
<svg class="absolute left-[1988px] top-[703px] w-[17px] h-[25px]"><use href="#pointer"/></svg>
</body>
</html>
